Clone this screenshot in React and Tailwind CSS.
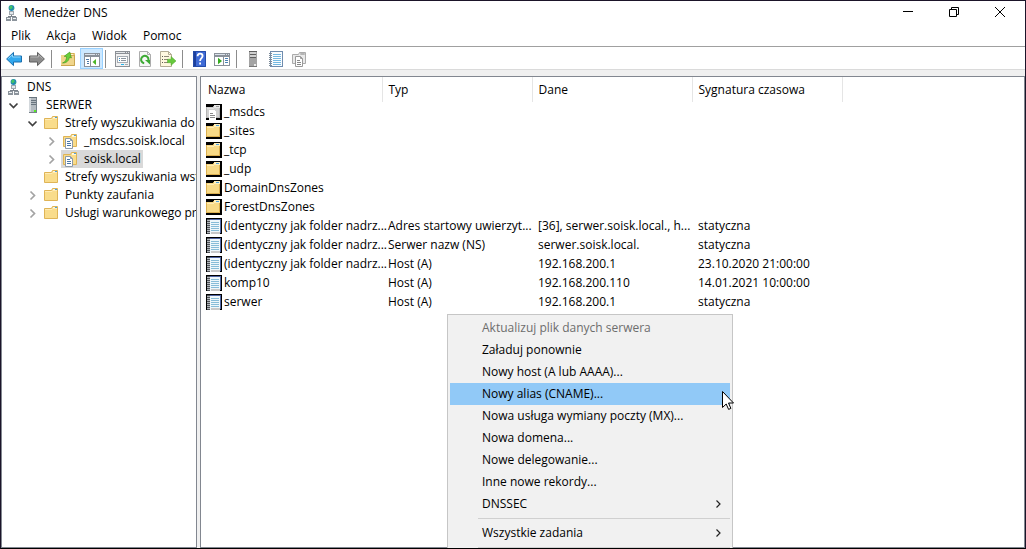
import { useState } from "react";

const tools = [
  { label: "Wstecz", icon: <ArrowIcon fill="#31a8ee" edge="#1b6fae" light="#8fd6fb" /> },
  { label: "Dalej", icon: <ArrowIcon flip fill="#8c8c8c" edge="#5f5f5f" light="#b4b4b4" /> },
  null,
  { label: "W górę o jeden poziom", icon: <FolderUpIcon /> },
  { label: "Pokaż/ukryj drzewo konsoli", icon: <PanelIcon />, active: true },
  null,
  { label: "Właściwości", icon: <PropertiesIcon /> },
  { label: "Odśwież", icon: <RefreshIcon /> },
  { label: "Eksportuj listę", icon: <ExportIcon /> },
  null,
  { label: "Pomoc", icon: <HelpIcon /> },
  { label: "Pokaż/ukryj okienko akcji", icon: <ActionPaneIcon /> },
  null,
  { label: "Nowy serwer", icon: <GrayServerIcon /> },
  { label: "Nowy rekord", icon: <NotebookIcon /> },
  { label: "Nowa strefa", icon: <CopyIcon /> },
];

const tree = [
  {
    label: "SERWER",
    icon: <ServerIcon />,
    open: true,
    children: [
      {
        label: "Strefy wyszukiwania do przodu",
        icon: <FolderIcon />,
        open: true,
        children: [
          { label: "_msdcs.soisk.local", icon: <ZoneIcon />, open: false },
          { label: "soisk.local", icon: <ZoneIcon />, open: false },
        ],
      },
      { label: "Strefy wyszukiwania wstecznego", icon: <FolderIcon /> },
      { label: "Punkty zaufania", icon: <FolderIcon />, open: false },
      { label: "Usługi warunkowego przesyłania dalej", icon: <FolderIcon />, open: false },
    ],
  },
];

const records = [
  { kind: "delegation", name: "_msdcs" },
  { kind: "folder", name: "_sites" },
  { kind: "folder", name: "_tcp" },
  { kind: "folder", name: "_udp" },
  { kind: "folder", name: "DomainDnsZones" },
  { kind: "folder", name: "ForestDnsZones" },
  {
    name: "(identyczny jak folder nadrz...",
    type: "Adres startowy uwierzyt...",
    data: "[36], serwer.soisk.local., h...",
    stamp: "statyczna",
  },
  {
    name: "(identyczny jak folder nadrz...",
    type: "Serwer nazw (NS)",
    data: "serwer.soisk.local.",
    stamp: "statyczna",
  },
  {
    name: "(identyczny jak folder nadrz...",
    type: "Host (A)",
    data: "192.168.200.1",
    stamp: "23.10.2020 21:00:00",
  },
  { name: "komp10", type: "Host (A)", data: "192.168.200.110", stamp: "14.01.2021 10:00:00" },
  { name: "serwer", type: "Host (A)", data: "192.168.200.1", stamp: "statyczna" },
];

const menuItems = [
  { label: "Aktualizuj plik danych serwera", disabled: true },
  { label: "Załaduj ponownie" },
  { label: "Nowy host (A lub AAAA)..." },
  { label: "Nowy alias (CNAME)...", active: true },
  { label: "Nowa usługa wymiany poczty (MX)..." },
  { label: "Nowa domena..." },
  { label: "Nowe delegowanie..." },
  { label: "Inne nowe rekordy..." },
  { label: "DNSSEC", submenu: true },
  null,
  { label: "Wszystkie zadania", submenu: true },
  null,
];

function Icon({ children, className = "" }) {
  return (
    <svg viewBox="0 0 16 16" className={`h-4 w-4 shrink-0 ${className}`} fill="none" aria-hidden="true">
      {children}
    </svg>
  );
}

function ArrowIcon({ flip, fill, edge, light }) {
  return (
    <Icon className={flip ? "-scale-x-100" : ""}>
      <path d="M.6 8 7.5 1.4V5h8v6h-8v3.6z" fill={fill} stroke={edge} />
      <path d="M2.3 7.6 6.5 3.8V6h8" stroke={light} />
    </Icon>
  );
}

function FolderUpIcon() {
  return (
    <Icon>
      <path d="M1 4h6l1-2h7v13H1z" fill="#f0d58b" />
      <path d="M1 14.5h13.5V4" stroke="#c9a550" />
      <path d="M9 2.5h5v2H9z" fill="#fff3cf" stroke="#d3ae57" />
      <path
        d="M2.5 12C5.5 11.2 6.5 8.5 6.6 5.6L4.2 5.3 9.8 1l1.6 6-2-.7C9 9.6 6.5 12.2 2.5 12z"
        fill="#6ad03c"
        stroke="#379514"
        strokeWidth=".6"
      />
    </Icon>
  );
}

function PanelIcon() {
  return (
    <Icon>
      <g shapeRendering="crispEdges">
        <path d="M0 2h16v14H0z" fill="#8a919a" />
        <path d="M1 6h5v9H1zM7 6h8v9H7z" fill="#fff" />
        <path d="M1 3h10v1H1zM12 3h1v1h-1zM14 3h1v1h-1z" fill="#dbe2ea" />
        <path d="M2 8h3v1H2zM3 10h2v1H3zM3 12h2v1H3z" fill="#4f79a7" />
      </g>
      <path d="M12 8v6L8.5 11z" fill="#4bb526" />
    </Icon>
  );
}

function PropertiesIcon() {
  return (
    <Icon>
      <g shapeRendering="crispEdges">
        <path d="M1 0h15v16H1z" fill="#8c9096" />
        <path d="M2 3h13v12H2z" fill="#f1f1f1" />
        <path d="M2 1h9v1H2zM12 1h1v1h-1zM14 1h1v1h-1z" fill="#e3e6e9" />
        <path d="M3 5h11v7H3z" fill="#a5abb2" />
        <path d="M4 6h9v5H4z" fill="#fff" />
        <path d="M5 7h1v1H5zM5 9h1v1H5z" fill="#318ac5" />
        <path d="M7 7h5v1H7zM7 9h5v1H7z" fill="#8a949e" />
        <path d="M7 13h3v1H7z" fill="#25b5ed" />
        <path d="M11 13h3v1h-3z" fill="#a4abb2" />
      </g>
    </Icon>
  );
}

function RefreshIcon() {
  return (
    <Icon>
      <path d="M2.5.5h8l3 3v12h-11z" fill="#f7f7f7" stroke="#acacac" />
      <path d="M10.5.5v3h3" stroke="#acacac" />
      <path d="M7.2 12.2A3.7 3.7 0 1 1 11.2 10" stroke="#3eaa35" strokeWidth="2" />
      <path d="M8 9h5v4.5z" fill="#3eaa35" />
    </Icon>
  );
}

function ExportIcon() {
  return (
    <Icon>
      <path d="M.5.5h8l3 3v12H.5z" fill="#fff8df" stroke="#b4ac94" />
      <path d="M8.5.5v3h3" stroke="#b4ac94" />
      <path d="M2 5.5h1M2 8.5h1M2 11.5h1" stroke="#5f5b52" />
      <path d="M4 5.5h5M4 8.5h4M4 11.5h4" stroke="#8f8876" />
      <path d="M7.5 8.2h3.6V5.5L16 10l-4.9 4.3v-2.6H7.5z" fill="#67c83d" stroke="#4aa628" strokeWidth=".5" />
    </Icon>
  );
}

function HelpIcon() {
  return (
    <Icon>
      <path d="M2 0h13v16H2z" fill="#3f6bd6" />
      <path d="M2 0h3v16H2z" fill="#1c3f9c" />
      <path d="M2.5.5h12v15h-12z" stroke="#254ca9" />
      <path d="M6.6 5.3C6.6 3.5 7.6 2.7 9.1 2.7s2.5.9 2.5 2.4C11.6 7 9.1 7.2 9.1 9.9" stroke="#fff" strokeWidth="1.8" />
      <path d="M8.2 11.5H10v1.9H8.2z" fill="#fff" />
    </Icon>
  );
}

function ActionPaneIcon() {
  return (
    <Icon>
      <g shapeRendering="crispEdges">
        <path d="M0 2h16v13H0z" fill="#8a919a" />
        <path d="M1 6h8v8H1zM10 6h5v8h-5z" fill="#fff" />
        <path d="M1 3h10v1H1zM12 3h1v1h-1zM14 3h1v1h-1z" fill="#dbe2ea" />
        <path d="M11 7h3v1h-3zM11 9h3v1h-3zM11 11h3v1h-3z" fill="#4b82b4" />
      </g>
      <path d="M4 6.8v6.4L8 10z" fill="#35ac20" />
    </Icon>
  );
}

function GrayServerIcon() {
  return (
    <Icon>
      <g shapeRendering="crispEdges">
        <path d="M4 0h8v16H4z" fill="#a3a3a3" />
        <path d="M4 0h8v1H4zM5 3h6v1H5zM5 6h6v1H5z" fill="#5e5e5e" />
        <path d="M5 1h6v2H5zM5 4h6v2H5z" fill="#cfcfcf" />
        <path d="M9 13h2v2H9z" fill="#e9e9e9" />
        <path d="M4 15h8v1H4z" fill="#777" />
      </g>
    </Icon>
  );
}

function NotebookIcon() {
  return (
    <Icon>
      <g shapeRendering="crispEdges">
        <path d="M2 0h13v16H2z" fill="#6f8cae" />
        <path d="M3 1h11v14H3z" fill="#f9fcff" />
        <path d="M5 3.5h8M5 5.5h8M5 7.5h8M5 9.5h8M5 11.5h8M5 13.5h8" stroke="#75b9e1" />
        <path d="M1 2.5h3M1 4.5h3M1 6.5h3M1 8.5h3M1 10.5h3M1 12.5h3M1 14.5h3" stroke="#7c8b9a" />
      </g>
    </Icon>
  );
}

function CopyIcon() {
  return (
    <Icon>
      <path d="M1.5 3.5h6l1-2h6v11h-13z" fill="#e9e9e9" stroke="#ababab" />
      <path d="M9.5 2.5h4v1h-4z" fill="#fff" stroke="#b5b5b5" />
      <path d="M4.5 5.5h5l2 2v8h-7z" fill="#fff" stroke="#999" />
      <path d="M9.5 5.5v2h2" stroke="#999" />
      <path d="M6 9.5h3M6 11.5h4M6 13.5h4" stroke="#888" />
    </Icon>
  );
}

function DnsIcon() {
  return (
    <Icon>
      <circle cx="7.5" cy="3" r="2.9" fill="#1f86b4" />
      <path d="M5.4 1.6 7.5.3l1.4 1.9-2 2.2-1.5-1zM8.8 3.8l1.4-.4-.5 1.8z" fill="#45c465" />
      <g shapeRendering="crispEdges">
        <path d="M5 6h5v4H5z" fill="#a0a7ae" />
        <path d="M6 7h3v2H6z" fill="#e4e8eb" />
        <path d="M7 10h1v1H7zM4 11h8v1H4z" fill="#79818a" />
        <path d="M2 12h5v4H2zM8 12h5v4H8z" fill="#8c949c" />
        <path d="M3 13h3v1H3zM9 13h3v1H9z" fill="#eef1f3" />
      </g>
    </Icon>
  );
}

function ServerIcon() {
  return (
    <Icon>
      <g shapeRendering="crispEdges">
        <path d="M4 0h8v16H4z" fill="#b3bac0" />
        <path d="M4 0h2v16H4z" fill="#d3d8dc" />
        <path d="M4 0h8v1H4zM6 3h5v1H6zM6 5h5v1H6zM6 7h5v1H6z" fill="#68747e" />
        <path d="M11 1h1v14h-1zM4 15h8v1H4z" fill="#76818a" />
        <path d="M9 13h2v2H9z" fill="#55ed22" />
      </g>
    </Icon>
  );
}

function FolderIcon() {
  return (
    <Icon>
      <path d="M.5 3.5h7l1-2h5v12H.5z" fill="#f9dc8b" stroke="#dfb456" />
      <path d="M9 2h4v2H9z" fill="#fff6d8" />
      <path d="M11 2h2v1h-2z" fill="#4ea0da" />
      <path d="M1 4.5h7l1-1h4" stroke="#ffebb5" />
    </Icon>
  );
}

function ZoneIcon() {
  return (
    <Icon>
      <path d="M.5 3.5h7l1-2h5v12H.5z" fill="#f9dc8b" stroke="#dfb456" />
      <path d="M9 2h4v2H9z" fill="#fff6d8" />
      <path d="M11 2h2v1h-2z" fill="#4ea0da" />
      <path d="M2.5 5.5h5l2 2v8h-7z" fill="#fff" stroke="#8d9aa8" />
      <path d="M7.5 5.5v2h2" stroke="#8d9aa8" />
      <path d="M4 8.5h3M4 10.5h4M4 12.5h4" stroke="#4977a7" />
    </Icon>
  );
}

function RecordIcon({ kind }) {
  if (kind === "folder" || kind === "delegation") {
    const gray = kind === "delegation";
    return (
      <Icon>
        <g shapeRendering="crispEdges">
          <path d="M0 0h16v16H0z" fill="#000" />
          <path d="M0 3h7l1-2h6v13H0z" fill={gray ? "#b4b4b4" : "#dcb050"} />
          <path d="M1 3h7l1-1h4v11H1z" fill={gray ? "#d0d0d0" : "#f8da87"} />
          <path d="M8 1h6v3H8z" fill={gray ? "#e6e6e6" : "#fff0bd"} />
          <path d="M10 2h3v1h-3z" fill={gray ? "#999" : "#4ea0da"} />
          <path d="M1 4h7v1H1z" fill={gray ? "#e2e2e2" : "#ffebb5"} />
          {gray && (
            <>
              <path d="M3 6h5l2 2v8H3z" fill="#fff" />
              <path d="M4 9.5h3M4 11.5h5M4 13.5h5" stroke="#888" />
            </>
          )}
        </g>
      </Icon>
    );
  }
  return (
    <Icon>
      <g shapeRendering="crispEdges">
        <path d="M0 0h16v16H0z" fill="#000" />
        <path d="M2 1h12v15H2z" fill="#eef7fb" />
        <path d="M3 1h12v1H3zM14 1h1v14h-1z" fill="#5065a4" />
        <path d="M5 4.5h8M5 6.5h8M5 8.5h8M5 10.5h8M5 12.5h8" stroke="#86bcd8" />
        <path d="M5 14h9v2H5z" fill="#c9c9c9" />
        <path d="M1 1h3v15H1z" fill="#4c5056" />
        <path d="M1 2.5h3M1 4.5h3M1 6.5h3M1 8.5h3M1 10.5h3M1 12.5h3M1 14.5h3" stroke="#b3b7bb" />
      </g>
    </Icon>
  );
}

function Chevron({ open }) {
  return (
    <Icon>
      {open ? (
        <path d="m3.5 6.5 4 4 4-4" stroke="#404040" strokeWidth="1.7" />
      ) : (
        <path d="m5.5 4.5 4 4-4 4" stroke="#a3a3a3" strokeWidth="1.7" />
      )}
    </Icon>
  );
}

function TreeNode({ node, selected, onSelect }) {
  const hasToggle = node.open !== undefined;
  const [open, setOpen] = useState(Boolean(node.open));
  return (
    <li>
      <div className="flex h-[18px] items-center">
        {hasToggle ? (
          <button type="button" aria-label={`Rozwiń ${node.label}`} aria-expanded={open} onClick={() => setOpen(!open)}>
            <Chevron open={open} />
          </button>
        ) : (
          <span className="w-4 shrink-0" />
        )}
        <button
          type="button"
          onClick={() => onSelect(node.label)}
          className={`ml-px flex h-[18px] items-center gap-[5px] whitespace-nowrap pl-0.5 pr-0.5 ${
            selected === node.label ? "bg-[#d9d9d9]" : ""
          }`}
        >
          {node.icon}
          {node.label}
        </button>
      </div>
      {open && node.children ? (
        <ul className="pl-[19px]">
          {node.children.map((child) => (
            <TreeNode key={child.label} node={child} selected={selected} onSelect={onSelect} />
          ))}
        </ul>
      ) : null}
    </li>
  );
}

function TitleBar() {
  return (
    <header className="flex h-6 shrink-0 items-center pl-[3px] pr-0.5">
      <DnsIcon />
      <h1 className="ml-1 flex-1">Menedżer DNS</h1>
      <button type="button" aria-label="Minimalizuj" className="flex h-5 w-[46px] items-center justify-center">
        <Icon>
          <path d="M3 6h10v1H3z" fill="#000" />
        </Icon>
      </button>
      <button type="button" aria-label="Przywróć" className="flex h-5 w-[46px] items-center justify-center">
        <Icon>
          <path d="M3.5 4.5h7v7h-7zM5.5 4V2.5h7v7H11" stroke="#000" />
        </Icon>
      </button>
      <button type="button" aria-label="Zamknij" className="flex h-5 w-[46px] items-center justify-center">
        <Icon>
          <path d="m3 2 10 10M13 2 3 12" stroke="#000" />
        </Icon>
      </button>
    </header>
  );
}

function Toolbar() {
  return (
    <div role="toolbar" className="flex h-6 shrink-0 items-end border-y border-t-[#a0a0a0] border-b-[#dadada] pl-0.5">
      {tools.map((tool, i) =>
        tool ? (
          <button
            key={tool.label}
            type="button"
            aria-label={tool.label}
            className={`flex h-[21px] w-[23px] items-center ${
              tool.active ? "border border-[#99d1ff] bg-[#cce8ff] pl-[3px]" : "pl-[3px]"
            }`}
          >
            {tool.icon}
          </button>
        ) : (
          <span key={i} className="flex h-[21px] w-2 items-center pl-0.5">
            <span className="h-[18px] w-px bg-[#8c8c8c]" />
          </span>
        )
      )}
    </div>
  );
}

function RecordTable() {
  return (
    <table className="w-[641px] table-fixed text-left">
      <thead>
        <tr className="h-[25px]">
          <th className="w-[181px] border-r border-[#e5e5e5] pl-[7px] font-normal">Nazwa</th>
          <th className="w-[150px] border-r border-[#e5e5e5] pl-1.5 font-normal">Typ</th>
          <th className="w-[160px] border-r border-[#e5e5e5] pl-1.5 font-normal">Dane</th>
          <th className="w-[150px] border-r border-[#e5e5e5] pl-1.5 font-normal">Sygnatura czasowa</th>
        </tr>
      </thead>
      <tbody>
        {records.map((row, i) => (
          <tr key={i} className="h-[19px] whitespace-nowrap">
            <td className="pl-[5px]">
              <span className="flex items-center gap-0.5">
                <RecordIcon kind={row.kind} />
                {row.name}
              </span>
            </td>
            <td className="pl-1.5">{row.type}</td>
            <td className="pl-1.5">{row.data}</td>
            <td className="pl-1.5">{row.stamp}</td>
          </tr>
        ))}
      </tbody>
    </table>
  );
}

function ContextMenu() {
  return (
    <div role="menu" className="absolute left-[446px] top-[313px] w-[286px] border border-[#c6c6c6] bg-[#f1f1f1] p-0.5">
      {menuItems.map((item, i) =>
        item ? (
          <button
            key={item.label}
            type="button"
            role="menuitem"
            disabled={item.disabled}
            className={`flex h-[22px] w-full items-center justify-between whitespace-nowrap pl-8 pr-1 text-left ${
              item.active ? "bg-[#91c9f7]" : ""
            } ${item.disabled ? "text-[#6d6d6d]" : ""}`}
          >
            {item.label}
            {item.submenu ? (
              <Icon>
                <path d="m6.5 4.5 3.5 3.5-3.5 3.5" stroke="#222" strokeWidth="1.2" />
              </Icon>
            ) : null}
          </button>
        ) : (
          <hr key={i} className="my-[3px] ml-7 border-[#d0d0d0]" />
        )
      )}
      <svg viewBox="0 0 12 19" className="absolute left-[274px] top-[76px] h-[19px] w-3" aria-hidden="true">
        <path d="M.5.5v16l3.7-3.5 2.4 5.4 2.3-1L6.5 12h5z" fill="#fff" stroke="#000" />
      </svg>
    </div>
  );
}

export default function App() {
  const [selected, setSelected] = useState("soisk.local");
  return (
    <div className="relative flex h-screen flex-col overflow-hidden border border-[#1b1429] border-b-black bg-white font-['Open_Sans',sans-serif] text-xs text-black">
      <TitleBar />
      <nav className="flex h-[21px] shrink-0 items-center pl-0.5">
        {["Plik", "Akcja", "Widok", "Pomoc"].map((label) => (
          <button key={label} type="button" className="px-2">
            {label}
          </button>
        ))}
      </nav>
      <Toolbar />
      <main className="flex min-h-0 flex-1 gap-[3px] bg-[#f0f0f0] pt-1.5">
        <aside className="w-[196px] shrink-0 overflow-hidden border border-[#828790] bg-white pl-1 pt-px">
          <div className="flex h-[18px] items-center gap-[5px]">
            <DnsIcon />
            DNS
          </div>
          <ul>
            {tree.map((node) => (
              <TreeNode key={node.label} node={node} selected={selected} onSelect={setSelected} />
            ))}
          </ul>
        </aside>
        <section className="min-w-0 flex-1 overflow-hidden border border-[#828790] bg-white">
          <RecordTable />
        </section>
      </main>
      <ContextMenu />
    </div>
  );
}
